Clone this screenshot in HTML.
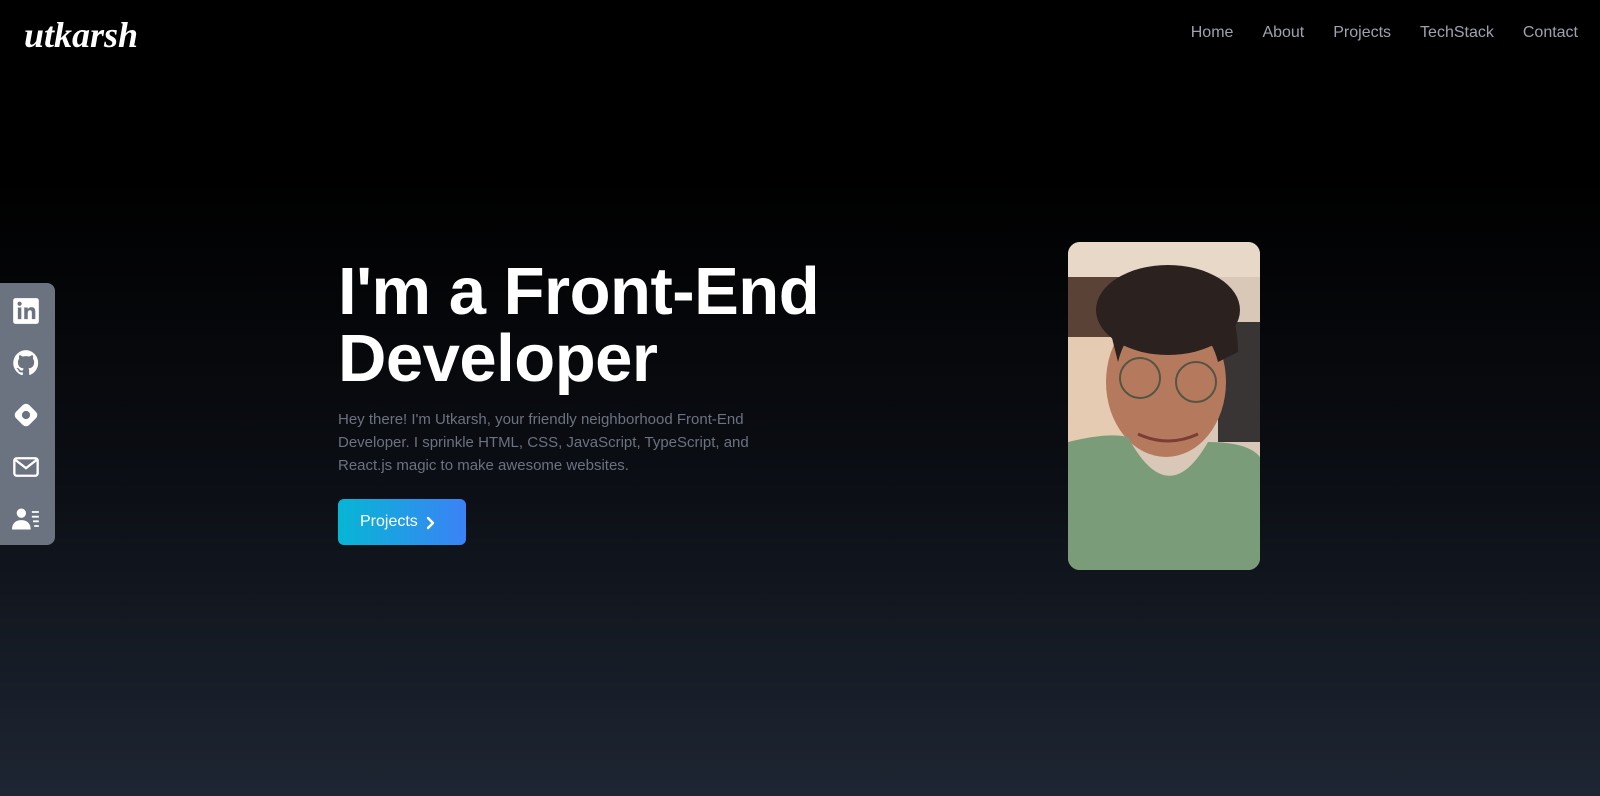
<!DOCTYPE html>
<html><head><meta charset="utf-8">
<style>
*{margin:0;padding:0;box-sizing:border-box}
body{width:1600px;height:796px;overflow:hidden;background:linear-gradient(180deg,#000 0%,#000 22%,#0b0e14 60%,#1e2633 100%);font-family:"Liberation Sans",sans-serif;color:#fff;position:relative}
.logo{position:absolute;left:24px;top:14px;font-family:"Comic Sans MS","URW Chancery L","Liberation Serif",cursive;font-style:italic;font-weight:bold;font-size:36px;color:#fff}
nav{position:absolute;top:24px;right:22px;display:flex;gap:29px;font-size:16px;color:#9ca3af}
.side{position:absolute;left:0;top:283px;width:55px;height:262px;background:#6b7280;border-radius:0 8px 8px 0}
.side svg{position:absolute;left:12px;width:28px;height:28px}
h1{position:absolute;left:338px;top:258px;font-size:67px;line-height:67px;font-weight:bold;letter-spacing:-0.5px}
p{position:absolute;left:338px;top:408px;width:418px;font-size:15px;line-height:23px;color:#6b7280}
.btn{position:absolute;left:338px;top:499px;width:128px;height:46px;border-radius:6px;background:linear-gradient(90deg,#06b6d4,#3b82f6);font-size:16px;line-height:46px;padding-left:22px}
.btn svg{position:absolute;left:88px;top:17px}
.photo{position:absolute;left:1068px;top:242px;width:192px;height:328px;border-radius:12px;overflow:hidden}
</style></head><body>
<div class="logo">utkarsh</div>
<nav><span>Home</span><span>About</span><span>Projects</span><span>TechStack</span><span>Contact</span></nav>
<div class="side">
<svg style="top:14px" viewBox="0 0 24 24"><rect x="1" y="1" width="22" height="22" rx="2" fill="#fff"/><rect x="5" y="9" width="3" height="10" fill="#6b7280"/><circle cx="6.5" cy="5.8" r="1.8" fill="#6b7280"/><path d="M10.5 9h3v1.5c.8-1.2 2-1.8 3.3-1.8 2.3 0 3.2 1.5 3.2 4V19h-3v-5.5c0-1.3-.4-2.1-1.5-2.1s-2 .8-2 2.3V19h-3z" fill="#6b7280"/></svg>
<svg style="top:66px" viewBox="0 0 24 24"><path fill="#fff" d="M12 1a11 11 0 0 0-3.5 21.4c.6.1.8-.2.8-.5v-2c-3.1.7-3.700-1.4-3.7-1.4-.5-1.3-1.2-1.6-1.2-1.6-1-.7.1-.7.1-.7 1.1.1 1.7 1.1 1.7 1.1 1 1.7 2.6 1.2 3.2.9.1-.7.4-1.2.7-1.5-2.5-.3-5-1.2-5-5.4 0-1.2.4-2.2 1.1-3-.1-.3-.5-1.4.1-2.9 0 0 .9-.3 3 1.1a10 10 0 0 1 5.5 0c2.1-1.4 3-1.1 3-1.1.6 1.5.2 2.6.1 2.9.7.8 1.1 1.8 1.1 3 0 4.2-2.600 5.1-5 5.4.4.3.7 1 .7 2v3c0 .3.2.6.8.5A11 11 0 0 0 12 1z"/></svg>
<svg style="top:118px" viewBox="0 0 24 24"><rect x="4" y="4" width="16" height="16" rx="4" transform="rotate(45 12 12)" fill="#fff"/><circle cx="12" cy="12" r="3.5" fill="#6b7280"/></svg>
<svg style="top:170px" viewBox="0 0 24 24"><rect x="2" y="4.5" width="20" height="15" rx="2" fill="none" stroke="#fff" stroke-width="2"/><path d="M3 6l9 7 9-7" fill="none" stroke="#fff" stroke-width="2"/></svg>
<svg style="top:222px" viewBox="0 0 24 24"><circle cx="8" cy="7" r="4" fill="#fff"/><path d="M0 21c0-5 3-8 8-8s8 3 8 8z" fill="#fff"/><path d="M17 6h6M17 10h6M18 14h5M19 18h4" stroke="#fff" stroke-width="1.6"/></svg>
</div>
<h1>I'm a Front-End<br>Developer</h1>
<p>Hey there! I'm Utkarsh, your friendly neighborhood Front-End Developer. I sprinkle HTML, CSS, JavaScript, TypeScript, and React.js magic to make awesome websites.</p>
<div class="btn">Projects<svg width="10" height="14" viewBox="0 0 10 14"><path d="M2 2l5 5-5 5" stroke="#fff" stroke-width="2.4" fill="none" stroke-linecap="round" stroke-linejoin="round"/></svg></div>
<div class="photo">
<svg width="192" height="328" viewBox="0 0 192 328">
<rect width="192" height="328" fill="#d9c8b8"/>
<rect y="0" width="192" height="35" fill="#e8d8c8"/>
<rect y="35" width="60" height="60" fill="#5a4236"/>
<rect y="95" width="60" height="110" fill="#e6cbb3"/>
<rect x="150" y="80" width="42" height="120" fill="#3a3535"/>
<ellipse cx="98" cy="140" rx="60" ry="75" fill="#b57a5e"/>
<ellipse cx="100" cy="68" rx="72" ry="45" fill="#2b2220"/>
<path d="M40 80 Q45 40 100 30 Q170 35 170 110 L150 120 Q140 80 100 75 Q60 78 50 120z" fill="#2b2220"/>
<circle cx="72" cy="136" r="20" fill="none" stroke="#554" stroke-width="2"/>
<circle cx="128" cy="140" r="20" fill="none" stroke="#554" stroke-width="2"/>
<path d="M70 192 Q100 206 130 192" stroke="#7a3e36" stroke-width="3" fill="none"/>
<path d="M0 200 Q40 190 60 195 Q100 270 140 200 Q180 200 192 215 V328 H0z" fill="#7b9c78"/>
</svg>
</div>
</body></html>
